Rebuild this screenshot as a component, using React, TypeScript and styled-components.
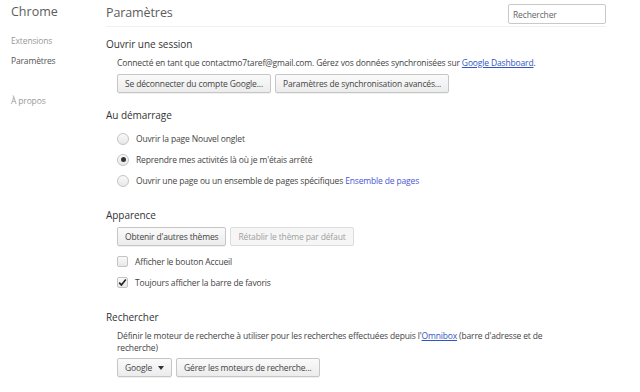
import * as React from 'react';
import styled, { createGlobalStyle } from 'styled-components';

const GlobalStyle = createGlobalStyle`
    html, body {
        margin: 0;
        padding: 0;
        background: #ffffff;
    }
    body {
        font-family: 'Open Sans', 'Noto Sans', sans-serif;
        color: #444;
    }
`;

const small = `
    font-size: 8.5px;
    letter-spacing: -0.15px;
`;

const Page = styled.div`
    display: flex;
    width: 640px;
    height: 392px;
    overflow: hidden;
`;

const Sidebar = styled.nav`
    width: 95px;
    padding-left: 11px;
    display: flex;
    flex-direction: column;
`;

const Brand = styled.div`
    height: 26px;
    line-height: 24px;
    font-size: 12.5px;
    color: #5c5c5c;
`;

const NavItem = styled.div<{ $active?: boolean; $gap?: number }>`
    ${small};
    line-height: 12px;
    margin-top: ${({ $gap }) => $gap ?? 8}px;
    color: ${({ $active }) => ($active ? '#555' : '#999')};
`;

const Main = styled.main`
    flex: 1;
    padding-right: 34px;
    display: flex;
    flex-direction: column;
`;

const Header = styled.header`
    height: 26px;
    display: flex;
    align-items: center;
    justify-content: space-between;
    border-bottom: 1px solid #f1f1f1;
`;

const Title = styled.h1`
    margin: 0;
    font-size: 12.5px;
    letter-spacing: -0.1px;
    font-weight: 400;
    color: #5c5c5c;
    line-height: 24px;
`;

const SearchInput = styled.input`
    box-sizing: border-box;
    width: 98px;
    height: 20px;
    margin-top: 2px;
    border: 1px solid #c9c9c9;
    border-radius: 2px;
    padding: 0 4px;
    font-family: inherit;
    ${small};
    color: #555;
    outline: none;
    &::placeholder {
        color: #666;
    }
`;

const Section = styled.section<{ $gap: number }>`
    margin-top: ${({ $gap }) => $gap}px;
`;

const Heading = styled.h2`
    margin: 0;
    font-size: 10px;
    letter-spacing: -0.05px;
    font-weight: 400;
    line-height: 16px;
    color: #333;
`;

const Body = styled.div`
    padding-left: 11px;
`;

const Text = styled.p`
    margin: 5px 0 0;
    ${small};
    line-height: 12px;
    color: #444;
`;

const Link = styled.a<{ $plain?: boolean }>`
    color: ${({ $plain }) => ($plain ? '#4b55d6' : '#3056c4')};
    text-decoration: ${({ $plain }) => ($plain ? 'none' : 'underline')};
    cursor: pointer;
`;

const ButtonRow = styled.div<{ $gap: number }>`
    display: flex;
    gap: 4px;
    margin-top: ${({ $gap }) => $gap}px;
`;

const Button = styled.button<{ $disabled?: boolean }>`
    box-sizing: border-box;
    height: 19px;
    padding: 0 7px;
    display: flex;
    align-items: center;
    gap: 6px;
    border: 1px solid ${({ $disabled }) => ($disabled ? '#dcdcdc' : '#c6c6c6')};
    border-radius: 2px;
    background: ${({ $disabled }) =>
        $disabled ? '#f6f6f6' : 'linear-gradient(#fafafa, #ececec)'};
    box-shadow: ${({ $disabled }) => ($disabled ? 'none' : '0 1px 0 rgba(0,0,0,0.06)')};
    font-family: inherit;
    ${small};
    color: ${({ $disabled }) => ($disabled ? '#a0a0a0' : '#444')};
`;

const Caret = styled.span`
    width: 0;
    height: 0;
    border-left: 3.5px solid transparent;
    border-right: 3.5px solid transparent;
    border-top: 4px solid #333;
`;

const OptionList = styled.div<{ $gap: number }>`
    margin-top: ${({ $gap }) => $gap}px;
    display: flex;
    flex-direction: column;
`;

const Option = styled.label`
    height: 21px;
    display: flex;
    align-items: center;
    gap: 7px;
    ${small};
    color: #444;
`;

const Radio = styled.span<{ $checked?: boolean }>`
    box-sizing: border-box;
    width: 12px;
    height: 12px;
    border-radius: 50%;
    border: 1px solid #c4c4c4;
    background: linear-gradient(#f9f9f9, #e8e8e8);
    display: flex;
    align-items: center;
    justify-content: center;
    &::after {
        content: '';
        display: ${({ $checked }) => ($checked ? 'block' : 'none')};
        width: 5px;
        height: 5px;
        border-radius: 50%;
        background: #333;
    }
`;

const Box = styled.span`
    box-sizing: border-box;
    width: 11px;
    height: 11px;
    border-radius: 2px;
    border: 1px solid #c4c4c4;
    background: linear-gradient(#f9f9f9, #e8e8e8);
    display: flex;
    align-items: center;
    justify-content: center;
`;

const Check = () => (
    <svg width="9" height="9" viewBox="0 0 9 9">
        <path d="M1.2 4.6 L3.4 7 L7.8 1.4" fill="none" stroke="#222" strokeWidth="1.6" />
    </svg>
);

const App = () => (
    <>
        <GlobalStyle />
        <Page>
            <Sidebar>
                <Brand>Chrome</Brand>
                <NavItem $gap={9}>Extensions</NavItem>
                <NavItem $active>Paramètres</NavItem>
                <NavItem $gap={28}>À propos</NavItem>
            </Sidebar>
            <Main>
                <Header>
                    <Title>Paramètres</Title>
                    <SearchInput placeholder="Rechercher" />
                </Header>

                <Section $gap={9}>
                    <Heading>Ouvrir une session</Heading>
                    <Body>
                        <Text>
                            Connecté en tant que contactmo7taref@gmail.com. Gérez vos données
                            synchronisées sur <Link>Google Dashboard</Link>.
                        </Text>
                        <ButtonRow $gap={5}>
                            <Button>Se déconnecter du compte Google...</Button>
                            <Button>Paramètres de synchronisation avancés...</Button>
                        </ButtonRow>
                    </Body>
                </Section>

                <Section $gap={14}>
                    <Heading>Au démarrage</Heading>
                    <Body>
                        <OptionList $gap={5}>
                            <Option>
                                <Radio />
                                Ouvrir la page Nouvel onglet
                            </Option>
                            <Option>
                                <Radio $checked />
                                Reprendre mes activités là où je m'étais arrêté
                            </Option>
                            <Option>
                                <Radio />
                                <span>
                                    Ouvrir une page ou un ensemble de pages spécifiques{' '}
                                    <Link $plain>Ensemble de pages</Link>
                                </span>
                            </Option>
                        </OptionList>
                    </Body>
                </Section>

                <Section $gap={16}>
                    <Heading>Apparence</Heading>
                    <Body>
                        <ButtonRow $gap={4}>
                            <Button>Obtenir d'autres thèmes</Button>
                            <Button $disabled>Rétablir le thème par défaut</Button>
                        </ButtonRow>
                        <OptionList $gap={5}>
                            <Option>
                                <Box />
                                Afficher le bouton Accueil
                            </Option>
                            <Option>
                                <Box>
                                    <Check />
                                </Box>
                                Toujours afficher la barre de favoris
                            </Option>
                        </OptionList>
                    </Body>
                </Section>

                <Section $gap={16}>
                    <Heading>Rechercher</Heading>
                    <Body>
                        <Text>
                            Définir le moteur de recherche à utiliser pour les recherches effectuées
                            depuis l'<Link>Omnibox</Link> (barre d'adresse et de
                            <br />
                            recherche)
                        </Text>
                        <ButtonRow $gap={4}>
                            <Button>
                                Google
                                <Caret />
                            </Button>
                            <Button>Gérer les moteurs de recherche...</Button>
                        </ButtonRow>
                    </Body>
                </Section>
            </Main>
        </Page>
    </>
);

export default App;
